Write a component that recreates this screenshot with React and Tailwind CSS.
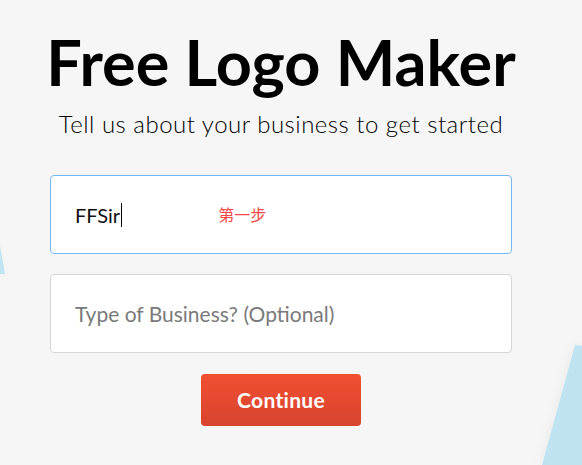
export default function App() {
  return (
    <div className="relative w-[582px] h-[465px] overflow-hidden bg-[#f6f6f6] font-['Lato','Noto_Sans',sans-serif]">
      {/* decorative shapes */}
      <svg className="absolute left-0 top-0" width="582" height="465" viewBox="0 0 582 465">
        <defs>
          <filter id="soft" x="-50%" y="-50%" width="200%" height="200%">
            <feDropShadow dx="0" dy="0" stdDeviation="6" floodColor="#000" floodOpacity="0.06" />
          </filter>
        </defs>
        <polygon points="0,246 5,274 0,274" fill="#bfe3f0" filter="url(#soft)" />
        <polygon points="575,345 600,348 600,465 542,465" fill="#bfe3f0" filter="url(#soft)" />
      </svg>

      <div className="relative flex w-[562px] flex-col items-center">
        <h1 className="mt-[30px] text-[63px] leading-none font-bold text-black">Free Logo Maker</h1>
        <p className="mt-[19px] text-[24px] leading-none font-light tracking-[0.5px] text-black">
          Tell us about your business to get started
        </p>

        <div className="mt-[39px] flex w-[462px] flex-col gap-[20px]">
          <div className="flex h-[79px] items-center rounded-[4px] border border-[#78b8f2] bg-white px-[24px]">
            <span className="text-[20px] text-[#111]">FFSir</span>
            <span className="ml-[1px] h-[24px] w-[1px] bg-black" />
            <span className="ml-[96px] -mt-[2px] font-['Noto_Sans_CJK_SC',sans-serif] text-[16px] text-[#f24848]">
              第一步
            </span>
          </div>
          <div className="flex h-[79px] items-center rounded-[4px] border border-[#d6d6d6] bg-white px-[24px]">
            <span className="text-[21px] text-[#7a7a7a]">Type of Business? (Optional)</span>
          </div>
        </div>

        <button className="mt-[21px] flex h-[52px] w-[160px] items-center justify-center rounded-[4px] bg-gradient-to-b from-[#f14f31] to-[#d8442f] text-[21px] font-bold tracking-[0.3px] text-white">
          Continue
        </button>
      </div>
    </div>
  );
}
